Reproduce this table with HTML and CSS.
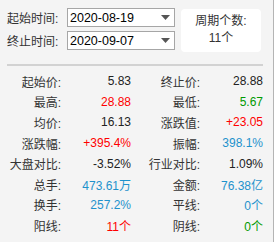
FILE: index.html
```html
<!DOCTYPE html>
<html>
<head>
<meta charset="utf-8">
<link rel="stylesheet" href="styles.css">
</head>
<body>
<div class="panel">
  <div class="top">
    <div class="dates">
      <div class="date-row">
        <span class="dlabel">起始时间:</span>
        <div class="select"><span>2020-08-19</span><svg class="arrow" width="9" height="5" viewBox="0 0 9 5"><path d="M0 0H9L4.5 5Z" fill="#555"/></svg></div>
      </div>
      <div class="date-row">
        <span class="dlabel">终止时间:</span>
        <div class="select"><span>2020-09-07</span><svg class="arrow" width="9" height="5" viewBox="0 0 9 5"><path d="M0 0H9L4.5 5Z" fill="#555"/></svg></div>
      </div>
    </div>
    <div class="period">
      <div>周期个数:</div>
      <div>11个</div>
    </div>
  </div>
  <div class="divider"></div>
  <div class="stats">
    <span class="lbl">起始价:</span><span class="val">5.83</span>
    <span class="lbl">终止价:</span><span class="val">28.88</span>
    <span class="lbl">最高:</span><span class="val red">28.88</span>
    <span class="lbl">最低:</span><span class="val green">5.67</span>
    <span class="lbl">均价:</span><span class="val">16.13</span>
    <span class="lbl">涨跌值:</span><span class="val red">+23.05</span>
    <span class="lbl">涨跌幅:</span><span class="val red">+395.4%</span>
    <span class="lbl">振幅:</span><span class="val blue">398.1%</span>
    <span class="lbl">大盘对比:</span><span class="val">-3.52%</span>
    <span class="lbl">行业对比:</span><span class="val">1.09%</span>
    <span class="lbl">总手:</span><span class="val blue">473.61万</span>
    <span class="lbl">金额:</span><span class="val blue">76.38亿</span>
    <span class="lbl">换手:</span><span class="val blue">257.2%</span>
    <span class="lbl">平线:</span><span class="val blue">0个</span>
    <span class="lbl">阳线:</span><span class="val red">11个</span>
    <span class="lbl">阴线:</span><span class="val green">0个</span>
  </div>
</div>
</body>
</html>
```

FILE: styles.css
```css
html, body {
  margin: 0;
  padding: 0;
  background: #f4f4f4;
}
body {
  font-family: "Liberation Sans", "Noto Sans CJK SC", sans-serif;
  font-size: 12px;
  color: #333;
}
.panel {
  width: 273px;
  height: 242px;
  border-right: 1px solid #b4b4b4;
  box-sizing: content-box;
}
.top {
  display: flex;
  padding: 8px 0 0 7px;
  gap: 6px;
}
.dates {
  display: flex;
  flex-direction: column;
  gap: 4px;
}
.date-row {
  display: flex;
  align-items: center;
  gap: 7px;
  height: 19px;
}
.dlabel {
  width: 53px;
  white-space: nowrap;
}
.select {
  width: 108px;
  height: 19px;
  box-sizing: border-box;
  border: 1px solid #a6a6a6;
  background: #fff;
  display: flex;
  align-items: center;
  justify-content: space-between;
  padding: 0 4px 0 2px;
  font-size: 12.5px;
  color: #000;
}
.arrow {
  display: block;
}
.period {
  margin-top: 1px;
  width: 80px;
  height: 43px;
  background: #fff;
  border-radius: 4px;
  display: flex;
  flex-direction: column;
  align-items: center;
  justify-content: center;
  gap: 3px;
  line-height: 14px;
  padding-bottom: 2px;
  box-sizing: border-box;
  color: #333;
}
.divider {
  margin: 12px 10px 0 7px;
  height: 2px;
  background: #d2d2d2;
}
.stats {
  margin-top: 5px;
  display: grid;
  grid-template-columns: 61px 70px 69px 63px;
  grid-auto-rows: 20.6px;
  align-items: center;
}
.lbl, .val {
  text-align: right;
  white-space: nowrap;
}
.val { color: #222; }
.red { color: #f00; }
.green { color: #009a00; }
.blue { color: #1e92cc; }
```
